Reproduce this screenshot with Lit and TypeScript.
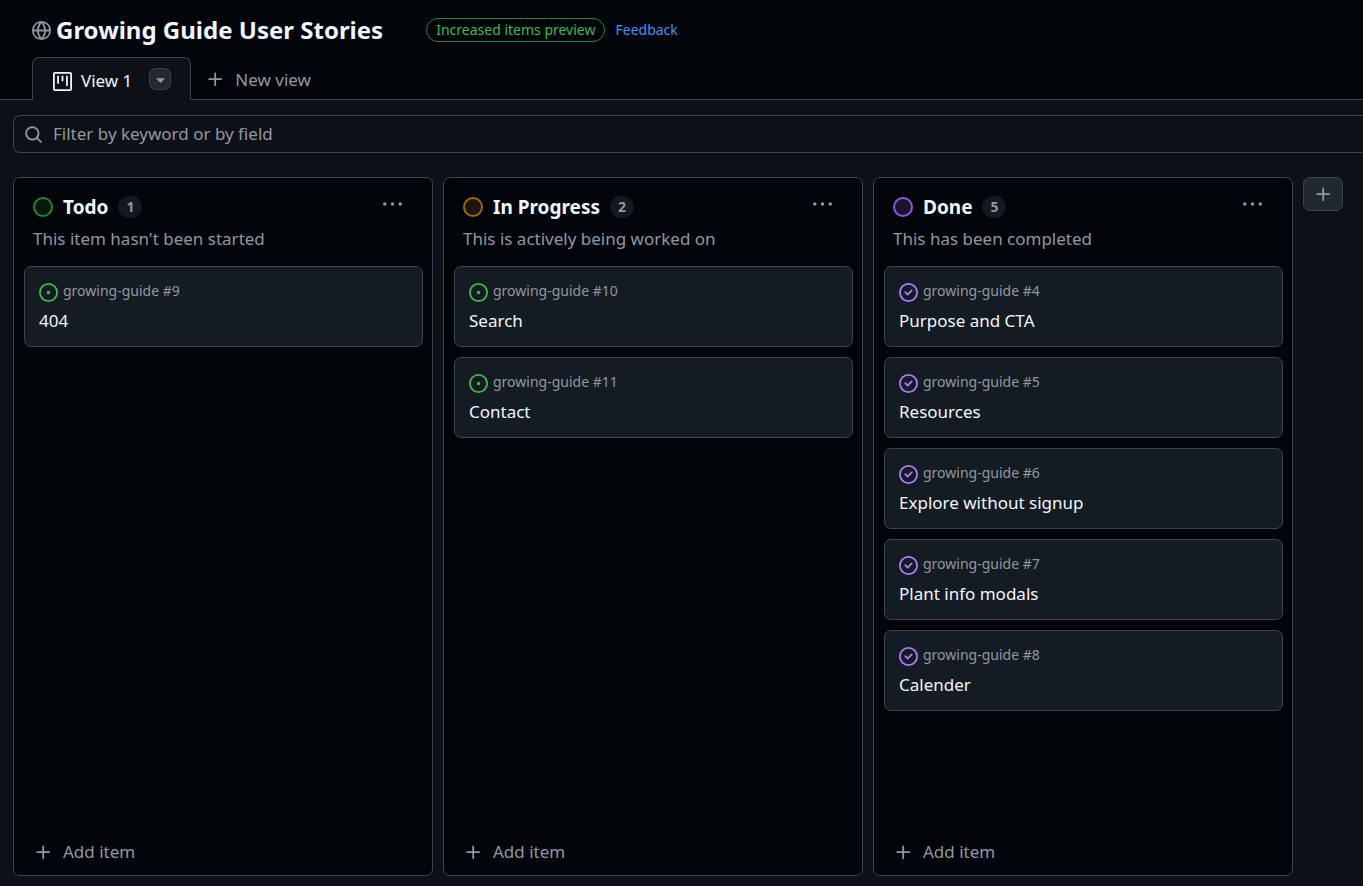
import { LitElement, html, css, svg } from "lit";
import { customElement, property, state } from "lit/decorators.js";

const icons = {
  globe: "M8 0a8 8 0 1 1 0 16A8 8 0 0 1 8 0ZM5.78 8.75a9.64 9.64 0 0 0 1.363 4.177c.255.426.542.832.857 1.215.245-.296.551-.705.857-1.215A9.64 9.64 0 0 0 10.22 8.75Zm4.44-1.5a9.64 9.64 0 0 0-1.363-4.177c-.307-.51-.612-.919-.857-1.215a9.927 9.927 0 0 0-.857 1.215A9.64 9.64 0 0 0 5.78 7.25Zm-5.944 1.5H1.543a6.507 6.507 0 0 0 4.666 5.5c-.123-.181-.24-.365-.352-.552-.715-1.192-1.437-2.874-1.581-4.948Zm-2.733-1.5h2.733c.144-2.074.866-3.756 1.58-4.948.12-.197.237-.381.353-.552a6.507 6.507 0 0 0-4.666 5.5Zm10.181 1.5c-.144 2.074-.866 3.756-1.58 4.948-.12.197-.237.381-.353.552a6.507 6.507 0 0 0 4.666-5.5Zm2.733-1.5a6.507 6.507 0 0 0-4.666-5.5c.123.181.24.365.353.552.714 1.192 1.436 2.874 1.58 4.948Z",
  project: "M1.75 0h12.5C15.216 0 16 .784 16 1.75v12.5A1.75 1.75 0 0 1 14.25 16H1.75A1.75 1.75 0 0 1 0 14.25V1.75C0 .784.784 0 1.75 0ZM1.5 1.75v12.5c0 .138.112.25.25.25h12.5a.25.25 0 0 0 .25-.25V1.75a.25.25 0 0 0-.25-.25H1.75a.25.25 0 0 0-.25.25ZM11.75 3a.75.75 0 0 1 .75.75v7.5a.75.75 0 0 1-1.5 0v-7.5a.75.75 0 0 1 .75-.75Zm-8.25.75a.75.75 0 0 1 1.5 0v5.5a.75.75 0 0 1-1.5 0ZM8 3a.75.75 0 0 1 .75.75v3.5a.75.75 0 0 1-1.5 0v-3.5A.75.75 0 0 1 8 3Z",
  plus: "M7.75 2a.75.75 0 0 1 .75.75V7h4.25a.75.75 0 0 1 0 1.5H8.5v4.25a.75.75 0 0 1-1.5 0V8.5H2.75a.75.75 0 0 1 0-1.5H7V2.75A.75.75 0 0 1 7.75 2Z",
  search: "M10.68 11.74a6 6 0 0 1-7.922-8.982 6 6 0 0 1 8.982 7.922l3.04 3.04a.749.749 0 0 1-.326 1.275.749.749 0 0 1-.734-.215ZM11.5 7a4.499 4.499 0 1 0-8.997 0A4.499 4.499 0 0 0 11.5 7Z",
  triangle: "m4.427 7.427 3.396 3.396a.25.25 0 0 0 .354 0l3.396-3.396A.25.25 0 0 0 11.396 7H4.604a.25.25 0 0 0-.177.427Z",
  kebab: "M8 9a1.5 1.5 0 1 0 0-3 1.5 1.5 0 0 0 0 3ZM1.5 9a1.5 1.5 0 1 0 0-3 1.5 1.5 0 0 0 0 3Zm13 0a1.5 1.5 0 1 0 0-3 1.5 1.5 0 0 0 0 3Z",
  open: "M8 9.5a1.5 1.5 0 1 0 0-3 1.5 1.5 0 0 0 0 3ZM8 0a8 8 0 1 1 0 16A8 8 0 0 1 8 0ZM1.5 8a6.5 6.5 0 1 0 13 0 6.5 6.5 0 0 0-13 0Z",
  closed: "M11.28 6.78a.75.75 0 0 0-1.06-1.06L7.25 8.69 5.78 7.22a.75.75 0 0 0-1.06 1.06l2 2a.75.75 0 0 0 1.06 0l3.5-3.5ZM16 8A8 8 0 1 1 0 8a8 8 0 0 1 16 0Zm-1.5 0a6.5 6.5 0 1 0-13 0 6.5 6.5 0 0 0 13 0Z",
};

type IconName = keyof typeof icons;

const icon = (name: IconName) => html`
  <svg class="icon ${name}" viewBox="0 0 16 16" aria-hidden="true">${svg`<path fill-rule="evenodd" d=${icons[name]}></path>`}</svg>
`;

interface Item { id: number; title: string; done?: boolean; }
interface Column { name: string; tone: string; description: string; items: Item[]; }

const shared = css`
  * { box-sizing: border-box; }
  h1, h2, h3, p, ul { margin: 0; padding: 0; }
  ul { list-style: none; }
  a { color: inherit; text-decoration: none; }
  button, input { font: inherit; color: inherit; margin: 0; padding: 0; border: 0; background: none; }
  button { cursor: pointer; }
  .icon { display: block; flex: none; width: 19px; height: 19px; fill: currentColor; }
`;

@customElement("board-column")
export class BoardColumn extends LitElement {
  @property({ attribute: false }) column!: Column;

  static styles = [shared, css`
    :host {
      display: flex;
      flex: 0 0 420px;
      flex-direction: column;
      min-height: 0;
      padding: 17px 9px 8px 10px;
      border: 1px solid #3d444d;
      border-radius: 7px;
      background: #010409;
    }
    .head { display: flex; align-items: center; gap: 10px; height: 24px; padding: 0 9px; }
    .dot { flex: none; width: 20px; height: 20px; border: 2px solid; border-radius: 50%; }
    .green { border-color: #238636; background: #08180f; }
    .amber { border-color: #9e6a03; background: #1c1509; }
    .purple { border-color: #8957e5; background: #1b152b; }
    h2 { font-size: 19px; line-height: 24px; font-weight: 700; color: #f0f6fc; }
    .count {
      min-width: 24px;
      padding: 0 7px;
      border-radius: 12px;
      background: #15191f;
      font-size: 14px;
      line-height: 22px;
      font-weight: 700;
      text-align: center;
    }
    .menu { align-self: flex-start; margin-left: auto; padding: 0 12px 0 0; }
    .description { padding: 8px 9px 15px; line-height: 24px; }
    ul { display: flex; flex: 1; flex-direction: column; gap: 10px; min-height: 0; overflow: auto; }
    li {
      flex: none;
      padding: 13px 14px;
      border: 1px solid #3d444d;
      border-radius: 7px;
      background: #151b23;
    }
    .repo { display: flex; align-items: center; gap: 5px; font-size: 14px; line-height: 22px; }
    .repo .icon { align-self: flex-end; }
    .open { color: #3fb950; }
    .closed { color: #ab7df8; }
    h3 { padding-top: 7px; font-size: 17px; line-height: 24px; font-weight: 400; color: #f0f6fc; }
    .add { display: flex; align-items: center; gap: 10px; padding: 5px 10px 3px; line-height: 24px; text-align: left; }
  `];

  render() {
    const { name, tone, description, items } = this.column;
    return html`
      <div class="head">
        <span class="dot ${tone}"></span>
        <h2>${name}</h2>
        <span class="count">${items.length}</span>
        <button class="menu" aria-label="More actions for ${name}">${icon("kebab")}</button>
      </div>
      <p class="description">${description}</p>
      <ul>
        ${items.map((item) => html`
          <li>
            <div class="repo">${icon(item.done ? "closed" : "open")}<span>growing-guide #${item.id}</span></div>
            <h3><a href="#${item.id}">${item.title}</a></h3>
          </li>
        `)}
      </ul>
      <button class="add">${icon("plus")}Add item</button>
    `;
  }
}

@customElement("app-root")
export class AppRoot extends LitElement {
  @state() private columns: Column[] = [
    { name: "Todo", tone: "green", description: "This item hasn't been started", items: [{ id: 9, title: "404" }] },
    {
      name: "In Progress", tone: "amber", description: "This is actively being worked on",
      items: [{ id: 10, title: "Search" }, { id: 11, title: "Contact" }],
    },
    {
      name: "Done", tone: "purple", description: "This has been completed",
      items: [
        { id: 4, title: "Purpose and CTA", done: true },
        { id: 5, title: "Resources", done: true },
        { id: 6, title: "Explore without signup", done: true },
        { id: 7, title: "Plant info modals", done: true },
        { id: 8, title: "Calender", done: true },
      ],
    },
  ];

  static styles = [shared, css`
    :host {
      display: flex;
      flex-direction: column;
      height: 100vh;
      overflow: hidden;
      background: #0d1117;
      color: #9198a1;
      font: 17px/24px "Noto Sans", sans-serif;
    }
    header { flex: none; background: #010409; }
    .title { display: flex; align-items: center; gap: 5px; padding: 14px 32px 11px; }
    h1 { font-size: 24px; line-height: 32px; font-weight: 700; color: #f0f6fc; }
    .preview {
      margin: 0 5px 0 38px;
      padding: 0 9px;
      border: 1px solid #238636;
      border-radius: 12px;
      font-size: 14px;
      line-height: 22px;
      color: #3fb950;
    }
    .feedback { font-size: 14px; line-height: 24px; color: #4493f8; }
    nav { display: flex; padding-left: 32px; box-shadow: inset 0 -1px #3d444d; }
    .tab {
      display: flex;
      align-items: center;
      gap: 17px;
      height: 43px;
      padding: 4px 19px 0 20px;
      border: 1px solid #3d444d;
      border-bottom: 0;
      border-radius: 7px 7px 0 0;
      background: #0d1117;
    }
    .view { display: flex; align-items: center; gap: 9px; color: #f0f6fc; }
    .options {
      display: grid;
      place-items: center;
      width: 22px;
      height: 22px;
      margin-bottom: 4px;
      border: 1px solid #3d444d;
      border-radius: 7px;
      background: #212830;
    }
    .new { display: flex; align-items: center; gap: 10px; padding: 2px 15px 0; }
    .filter {
      display: flex;
      flex: none;
      align-items: center;
      gap: 10px;
      margin: 15px 0 24px 13px;
      padding: 6px 10px;
      border: 1px solid #3d444d;
      border-right: 0;
      border-radius: 7px 0 0 7px;
    }
    .filter label { display: block; }
    .filter input { flex: 1; min-width: 0; height: 24px; outline: 0; }
    .filter input::placeholder { color: #9198a1; opacity: 1; }
    main { display: flex; flex: 1; gap: 10px; min-height: 0; padding: 0 13px 10px; overflow: hidden; }
    .add-column {
      display: grid;
      flex: none;
      place-items: center;
      width: 40px;
      height: 34px;
      border: 1px solid #3d444d;
      border-radius: 7px;
      background: #212830;
    }
  `];

  render() {
    return html`
      <header>
        <div class="title">
          ${icon("globe")}
          <h1>Growing Guide User Stories</h1>
          <span class="preview">Increased items preview</span>
          <a class="feedback" href="#feedback">Feedback</a>
        </div>
        <nav>
          <div class="tab">
            <a class="view" href="#view-1">${icon("project")}View 1</a>
            <button class="options" aria-label="View options">${icon("triangle")}</button>
          </div>
          <button class="new">${icon("plus")}New view</button>
        </nav>
      </header>
      <div class="filter">
        <label for="filter" aria-label="Filter items">${icon("search")}</label>
        <input id="filter" type="text" placeholder="Filter by keyword or by field" />
      </div>
      <main>
        ${this.columns.map((column) => html`<board-column .column=${column}></board-column>`)}
        <button class="add-column" aria-label="Add column">${icon("plus")}</button>
      </main>
    `;
  }
}
